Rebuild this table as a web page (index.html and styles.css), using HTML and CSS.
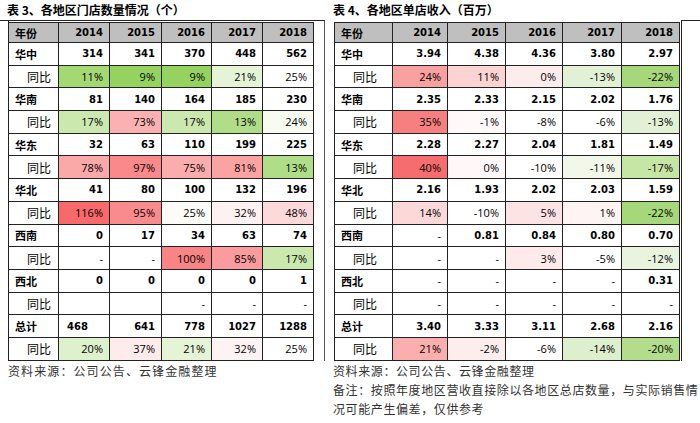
FILE: index.html
```html
<!DOCTYPE html>
<html lang="zh-CN">
<head>
<meta charset="utf-8">
<title>各地区门店数量与单店收入</title>
<link rel="stylesheet" href="styles.css">
</head>
<body>
<div class="page">
  <section class="panel panel-l">
    <div class="title">表 3、各地区门店数量情况（个）</div>
    <div class="lframe">
      <div class="lt">
        <div class="grid grid-l">
          <div class="c hd lab">年份</div><div class="c hd num">2014</div><div class="c hd num">2015</div><div class="c hd num">2016</div><div class="c hd num">2017</div><div class="c hd num">2018</div>

          <div class="c lab">华中</div><div class="c num">314</div><div class="c num">341</div><div class="c num">370</div><div class="c num">448</div><div class="c num">562</div>
          <div class="c sub">同比</div><div class="c pct" style="background:#A3D873">11%</div><div class="c pct" style="background:#96D25F">9%</div><div class="c pct" style="background:#96D25F">9%</div><div class="c pct" style="background:#E5F4D7">21%</div><div class="c pct">25%</div>

          <div class="c lab">华南</div><div class="c num">81</div><div class="c num">140</div><div class="c num">164</div><div class="c num">185</div><div class="c num">230</div>
          <div class="c sub">同比</div><div class="c pct" style="background:#CBE9AF">17%</div><div class="c pct" style="background:#FBB0B1">73%</div><div class="c pct" style="background:#CBE9AF">17%</div><div class="c pct" style="background:#B0DD87">13%</div><div class="c pct" style="background:#F7FBF2">24%</div>

          <div class="c lab">华东</div><div class="c num">32</div><div class="c num">63</div><div class="c num">110</div><div class="c num">199</div><div class="c num">225</div>
          <div class="c sub">同比</div><div class="c pct" style="background:#FBA8A9">78%</div><div class="c pct" style="background:#F9898A">97%</div><div class="c pct" style="background:#FBACAE">75%</div><div class="c pct" style="background:#FBA2A3">81%</div><div class="c pct" style="background:#B0DD87">13%</div>

          <div class="c lab">华北</div><div class="c num">41</div><div class="c num">80</div><div class="c num">100</div><div class="c num">132</div><div class="c num">196</div>
          <div class="c sub">同比</div><div class="c pct" style="background:#F8696B">116%</div><div class="c pct" style="background:#FA8B8D">95%</div><div class="c pct" style="background:#FBFBF8">25%</div><div class="c pct" style="background:#FEF1F2">32%</div><div class="c pct" style="background:#FDD9DA">48%</div>

          <div class="c lab">西南</div><div class="c num">0</div><div class="c num">17</div><div class="c num">34</div><div class="c num">63</div><div class="c num">74</div>
          <div class="c sub">同比</div><div class="c pct">-</div><div class="c pct">-</div><div class="c pct" style="background:#F98486">100%</div><div class="c pct" style="background:#FA9C9D">85%</div><div class="c pct" style="background:#CBE9AF">17%</div>

          <div class="c lab">西北</div><div class="c num">0</div><div class="c num">0</div><div class="c num">0</div><div class="c num">0</div><div class="c num">1</div>
          <div class="c sub">同比</div><div class="c pct"></div><div class="c pct"></div><div class="c pct">-</div><div class="c pct">-</div><div class="c pct">-</div>

          <div class="c lab">总计</div><div class="c num num-left">468</div><div class="c num">641</div><div class="c num">778</div><div class="c num">1027</div><div class="c num">1288</div>
          <div class="c sub">同比</div><div class="c pct" style="background:#DEF1CD">20%</div><div class="c pct" style="background:#FEEBEC">37%</div><div class="c pct" style="background:#E5F4D7">21%</div><div class="c pct" style="background:#FEF3F4">32%</div><div class="c pct">25%</div>
        </div>
      </div>
    </div>
    <p class="src src-l">资料来源：公司公告、云锋金融整理</p>
  </section>

  <section class="panel panel-r">
    <div class="title">表 4、各地区单店收入（百万）</div>
    <div class="rframe">
      <div class="rt">
        <div class="grid grid-r">
          <div class="c hd lab">年份</div><div class="c hd num">2014</div><div class="c hd num">2015</div><div class="c hd num">2016</div><div class="c hd num">2017</div><div class="c hd num">2018</div>

          <div class="c lab">华中</div><div class="c num">3.94</div><div class="c num">4.38</div><div class="c num">4.36</div><div class="c num">3.80</div><div class="c num">2.97</div>
          <div class="c sub">同比</div><div class="c pct" style="background:#F9A0A0">24%</div><div class="c pct" style="background:#FCD3D3">11%</div><div class="c pct" style="background:#FDECEC">0%</div><div class="c pct" style="background:#E2F1D6">-13%</div><div class="c pct" style="background:#A6D77A">-22%</div>

          <div class="c lab">华南</div><div class="c num">2.35</div><div class="c num">2.33</div><div class="c num">2.15</div><div class="c num">2.02</div><div class="c num">1.76</div>
          <div class="c sub">同比</div><div class="c pct" style="background:#F67F80">35%</div><div class="c pct" style="background:#FFF9F9">-1%</div><div class="c pct">-8%</div><div class="c pct">-6%</div><div class="c pct" style="background:#E2F1D6">-13%</div>

          <div class="c lab">华东</div><div class="c num">2.28</div><div class="c num">2.27</div><div class="c num">2.04</div><div class="c num">1.81</div><div class="c num">1.49</div>
          <div class="c sub">同比</div><div class="c pct" style="background:#F56D6E">40%</div><div class="c pct" style="background:#FFF8F8">0%</div><div class="c pct">-10%</div><div class="c pct" style="background:#F1F8EA">-11%</div><div class="c pct" style="background:#C6E6A6">-17%</div>

          <div class="c lab">华北</div><div class="c num">2.16</div><div class="c num">1.93</div><div class="c num">2.02</div><div class="c num">2.03</div><div class="c num">1.59</div>
          <div class="c sub">同比</div><div class="c pct" style="background:#FCD8D8">14%</div><div class="c pct">-10%</div><div class="c pct" style="background:#FDE3E3">5%</div><div class="c pct" style="background:#FEF4F4">1%</div><div class="c pct" style="background:#A6D77A">-22%</div>

          <div class="c lab">西南</div><div class="c pct">-</div><div class="c num">0.81</div><div class="c num">0.84</div><div class="c num">0.80</div><div class="c num">0.70</div>
          <div class="c sub">同比</div><div class="c pct">-</div><div class="c pct">-</div><div class="c pct" style="background:#FEEAEA">3%</div><div class="c pct">-5%</div><div class="c pct" style="background:#E8F4DD">-12%</div>

          <div class="c lab">西北</div><div class="c pct">-</div><div class="c pct">-</div><div class="c pct">-</div><div class="c pct">-</div><div class="c num">0.31</div>
          <div class="c sub">同比</div><div class="c pct">-</div><div class="c pct">-</div><div class="c pct">-</div><div class="c pct">-</div><div class="c pct">-</div>

          <div class="c lab">总计</div><div class="c num">3.40</div><div class="c num">3.33</div><div class="c num">3.11</div><div class="c num">2.68</div><div class="c num">2.16</div>
          <div class="c sub">同比</div><div class="c pct" style="background:#FAAEAE">21%</div><div class="c pct" style="background:#FEEDED">-2%</div><div class="c pct">-6%</div><div class="c pct" style="background:#DDEFCD">-14%</div><div class="c pct" style="background:#B3DD8C">-20%</div>
        </div>
      </div>
      <div class="stub"></div>
    </div>
    <p class="src src-r">资料来源：公司公告、云锋金融整理</p>
    <p class="src src-r">备注：按照年度地区营收直接除以各地区总店数量，与实际销售情况可能产生偏差，仅供参考</p>
  </section>
</div>
</body>
</html>
```

FILE: styles.css
```css
* { box-sizing: border-box; }

body {
  margin: 0;
  background: #fff;
  color: #000;
  font-family: "Noto Sans CJK SC", "Noto Sans", sans-serif;
}

.page {
  display: flex;
  width: 700px;
  height: 423px;
  overflow: hidden;
}

.panel-l { width: 325px; flex: none; }
.panel-r { margin-left: 8px; flex: 1; min-width: 0; }

.title {
  height: 20px;
  line-height: 20px;
  font-size: 12px;
  font-weight: 700;
  white-space: nowrap;
  padding-left: 7px;
}
.panel-r .title { padding-left: 0; }

/* left frame */
.lframe {
  border-top: 1px solid #222;
  border-right: 1px solid #555;
}
.lt {
  margin-left: 8px;
  border-left: 1px solid #222;
  padding-top: 1px;
  width: 306px;
}

/* right frame */
.rframe {
  display: flex;
  align-items: stretch;
}
.rt {
  margin-left: 1px;
  padding-top: 2px;
}
.stub {
  flex: 1;
  margin-left: 1px;
  border-top: 1px solid #222;
  border-left: 1px solid #222;
}

.grid {
  display: grid;
  border-top: 1px solid #222;
  grid-template-rows: 20px repeat(14, 22.7px);
}
.grid-l { grid-template-columns: 50px 51px 52px 50px 51px 51px; }
.grid-r {
  grid-template-columns: 58px 55px 58px 57px 59px 58px;
  border-left: 1px solid #222;
}

.c {
  border-right: 1px solid #222;
  border-bottom: 1px solid #222;
  display: flex;
  align-items: center;
  white-space: nowrap;
  overflow: hidden;
  background: #fff;
}

.hd { background: #BFBFBF; }

.lab {
  justify-content: flex-start;
  padding-left: 6px;
  font-size: 11px;
  font-weight: 700;
}

.sub {
  justify-content: flex-start;
  padding-left: 18px;
  font-size: 12px;
  font-weight: 400;
}

.num {
  justify-content: flex-end;
  padding-right: 6px;
  font-family: "DejaVu Sans", "Noto Sans CJK SC", sans-serif;
  font-size: 10px;
  font-weight: 700;
}
.num-left {
  justify-content: flex-start;
  padding-left: 8px;
}

.pct {
  justify-content: flex-end;
  padding-right: 6px;
  font-family: "Open Sans", "Noto Sans", sans-serif;
  font-size: 11px;
  font-weight: 400;
}

.src {
  margin: 0;
  font-size: 12px;
  line-height: 19px;
  color: #333;
  letter-spacing: 0.6px;
}
.src-l { padding-left: 8px; letter-spacing: 1.1px; }
```
